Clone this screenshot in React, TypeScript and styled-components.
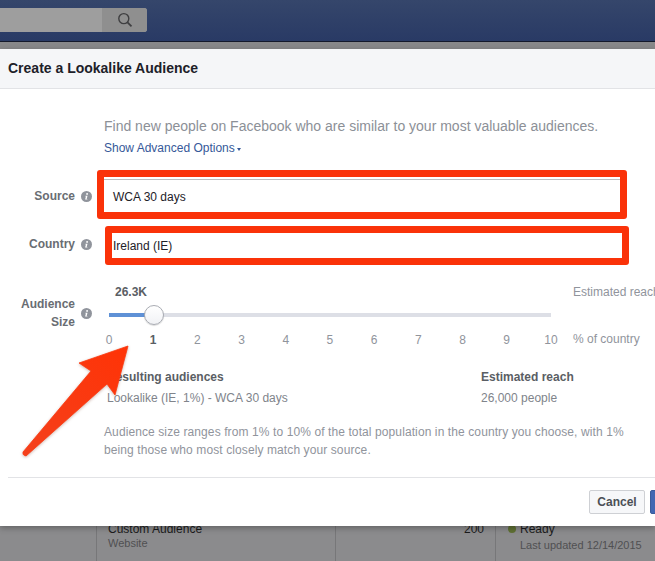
import React from "react";
import styled, { createGlobalStyle } from "styled-components";

const GlobalStyle = createGlobalStyle`
  html, body {
    margin: 0;
    padding: 0;
    background: #8b8b8d;
  }
  body {
    font-family: "Liberation Sans", Arial, sans-serif;
    font-size: 12px;
    overflow: hidden;
  }
`;

const Page = styled.div`
  position: relative;
  width: 655px;
  height: 561px;
  overflow: hidden;
`;

const TopBar = styled.div`
  height: 33px;
  display: flex;
  align-items: flex-start;
  padding-top: 8px;
  background: linear-gradient(#35466b, #293a65);
  border-bottom: 1px solid #14192b;
`;

const SearchBox = styled.div`
  width: 147px;
  height: 24px;
  display: flex;
  justify-content: flex-end;
  background: #9e9e9e;
  border-radius: 0 3px 3px 0;
`;

const SearchButton = styled.div`
  width: 45px;
  display: flex;
  align-items: center;
  justify-content: center;
  background: #8f8f8f;
  border-radius: 0 3px 3px 0;
`;

const DimStrip = styled.div`
  height: 7px;
  background: #88888a;
`;

const Modal = styled.div`
  position: relative;
  z-index: 1;
  height: 477px;
  background: #fff;
  box-shadow: 0 2px 6px rgba(0, 0, 0, 0.3);
  display: flex;
  flex-direction: column;
`;

const ModalHeader = styled.div`
  height: 39px;
  line-height: 38px;
  padding-left: 8px;
  background: #f5f6f8;
  border-bottom: 1px solid #e2e3e6;
  font-size: 14px;
  font-weight: 700;
  color: #1d2129;
`;

const ModalBody = styled.div`
  flex: 1;
  padding-top: 29px;
`;

const Intro = styled.div`
  padding-left: 104px;
  font-size: 14px;
  line-height: 17px;
  color: #8c9097;
  white-space: nowrap;
`;

const AdvancedLink = styled.div`
  padding-left: 104px;
  margin-top: 5px;
  line-height: 16px;
  color: #365899;
  display: flex;
  align-items: center;
  gap: 2px;
`;

const Caret = styled.span`
  width: 0;
  height: 0;
  margin-top: 2px;
  border-left: 2.5px solid transparent;
  border-right: 2.5px solid transparent;
  border-top: 3px solid #365899;
`;

const FormRow = styled.div<{ $top: number }>`
  display: flex;
  align-items: flex-start;
  margin-top: ${(p) => p.$top}px;
`;

const LabelCell = styled.div<{ $top?: number }>`
  flex: none;
  width: 92px;
  margin-top: ${(p) => p.$top ?? 0}px;
  display: flex;
  align-items: center;
  justify-content: flex-end;
  gap: 6px;
`;

const Label = styled.div`
  width: 75px;
  flex: none;
  text-align: right;
  font-weight: 700;
  line-height: 18px;
  color: #696d73;
`;

const InfoIcon = () => (
  <svg width="11" height="11" viewBox="0 0 11 11" style={{ flex: "none" }}>
    <circle cx="5.5" cy="5.5" r="5.5" fill="#90949c" />
    <circle cx="6.1" cy="2.9" r="0.95" fill="#fff" />
    <path d="M4.5 4.7h2l-.8 3.2h.8l-.2.7H4.1l.8-3.2h-.6z" fill="#fff" />
  </svg>
);

const RedBox = styled.div<{ $indent: number; $width: number; $height: number }>`
  flex: none;
  box-sizing: border-box;
  margin-left: ${(p) => p.$indent}px;
  width: ${(p) => p.$width}px;
  height: ${(p) => p.$height}px;
  border: 7px solid #fa3209;
  border-radius: 3px;
  background: #fff;
  display: flex;
  align-items: center;
  color: #1d2129;
`;

const SourceField = styled.div`
  flex: 1;
  height: 100%;
  box-sizing: border-box;
  margin-top: 3px;
  border-top: 1px solid #bdbdbd;
  padding-left: 9px;
  display: flex;
  align-items: center;
`;

const CountryField = styled.div`
  padding-left: 1px;
`;

const SliderRow = styled.div`
  display: flex;
  margin-top: 19px;
`;

const SliderLabel = styled(LabelCell)`
  height: 36px;
  margin-top: 11px;
`;

const SliderColumn = styled.div`
  flex: none;
  width: 442px;
  margin-left: 17px;
`;

const SliderValue = styled.div`
  padding-left: 6px;
  line-height: 16px;
  font-weight: 700;
  color: #5a5e64;
`;

const Track = styled.div`
  position: relative;
  height: 4px;
  margin-top: 13px;
  background: #dddfe6;
`;

const TrackFill = styled.div`
  height: 100%;
  background: #5f91d6;
`;

const Thumb = styled.div`
  position: absolute;
  top: -8px;
  width: 20px;
  height: 20px;
  box-sizing: border-box;
  border: 1px solid #a9acb3;
  border-radius: 50%;
  background: linear-gradient(#fff, #f1f2f5);
  box-shadow: 0 1px 1px rgba(0, 0, 0, 0.15);
`;

const Ticks = styled.div`
  display: flex;
  justify-content: space-between;
  margin-top: 15px;
`;

const Tick = styled.div<{ $active?: boolean }>`
  width: 0;
  display: flex;
  justify-content: center;
  line-height: 16px;
  font-weight: ${(p) => (p.$active ? 700 : 400)};
  color: ${(p) => (p.$active ? "#5a5e64" : "#90949c")};
`;

const SideColumn = styled.div`
  margin-left: 22px;
  white-space: nowrap;
  color: #90949c;
  line-height: 16px;
  display: flex;
  flex-direction: column;
  gap: 31px;
`;

const Results = styled.div`
  display: flex;
  margin-top: 21px;
  padding-left: 107px;
`;

const ResultColumn = styled.div<{ $width?: number }>`
  width: ${(p) => (p.$width ? `${p.$width}px` : "auto")};
  white-space: nowrap;
`;

const ResultTitle = styled.div`
  font-weight: 700;
  line-height: 16px;
  color: #5a5e64;
`;

const ResultValue = styled.div`
  margin-top: 5px;
  line-height: 16px;
  color: #80848b;
`;

const Note = styled.div`
  margin-top: 17px;
  padding-left: 104px;
  line-height: 18px;
  letter-spacing: 0.1px;
  color: #90949c;
  white-space: nowrap;
`;

const ModalFooter = styled.div`
  height: 49px;
  box-sizing: border-box;
  margin-left: 8px;
  margin-right: -60px;
  border-top: 1px solid #e2e3e6;
  display: flex;
  justify-content: flex-end;
  gap: 5px;
  padding-top: 12px;
`;

const CancelButton = styled.button`
  width: 56px;
  height: 24px;
  padding: 0;
  box-sizing: border-box;
  border: 1px solid #ced0d4;
  border-radius: 2px;
  background: #f6f7f9;
  font: 700 12px "Liberation Sans", Arial, sans-serif;
  color: #4b4f56;
`;

const PrimaryButton = styled.button`
  width: 65px;
  height: 24px;
  padding: 0;
  border: 1px solid #3b5b9a;
  border-radius: 2px;
  background: #4267b2;
  font: 700 12px "Liberation Sans", Arial, sans-serif;
  color: #fff;
`;

const Backdrop = styled.div`
  display: flex;
  margin-top: -4px;
  height: 45px;
  background: #8b8b8d;
`;

const Cell = styled.div<{ $width: number; $line?: boolean; $right?: boolean }>`
  flex: none;
  width: ${(p) => p.$width}px;
  box-sizing: border-box;
  padding: 0 11px;
  border-right: ${(p) => (p.$line ? "1px solid #777779" : "0")};
  text-align: ${(p) => (p.$right ? "right" : "left")};
`;

const CellMain = styled.div`
  line-height: 14px;
  color: #1b1b1c;
`;

const CellSub = styled.div`
  font-size: 11px;
  line-height: 14px;
  color: #505052;
`;

const StatusRow = styled.div`
  display: flex;
  align-items: center;
  gap: 4px;
  margin-left: 1px;
`;

const StatusDot = styled.span`
  width: 8px;
  height: 8px;
  border-radius: 50%;
  background: #5f7034;
`;

const StatusSub = styled(CellSub)`
  margin-top: 2px;
  padding-left: 13px;
  white-space: nowrap;
`;

const Arrow = styled.svg`
  position: absolute;
  z-index: 2;
  left: 15px;
  top: 340px;
`;

const ticks = ["0", "1", "2", "3", "4", "5", "6", "7", "8", "9", "10"];

export default function App() {
  return (
    <Page>
      <GlobalStyle />
      <TopBar>
        <SearchBox>
          <SearchButton>
            <svg width="16" height="16" viewBox="0 0 16 16" fill="none" stroke="#3f3f41" strokeWidth="1.4">
              <circle cx="6.8" cy="6.6" r="5" />
              <path d="M10.5 10.3l4 4" strokeWidth="1.8" />
            </svg>
          </SearchButton>
        </SearchBox>
      </TopBar>
      <DimStrip />
      <Modal>
        <ModalHeader>Create a Lookalike Audience</ModalHeader>
        <ModalBody>
          <Intro>Find new people on Facebook who are similar to your most valuable audiences.</Intro>
          <AdvancedLink>
            Show Advanced Options
            <Caret />
          </AdvancedLink>
          <FormRow $top={14}>
            <LabelCell $top={17}>
              <Label>Source</Label>
              <InfoIcon />
            </LabelCell>
            <RedBox $indent={5} $width={530} $height={49}>
              <SourceField>WCA 30 days</SourceField>
            </RedBox>
          </FormRow>
          <FormRow $top={7}>
            <LabelCell $top={9}>
              <Label>Country</Label>
              <InfoIcon />
            </LabelCell>
            <RedBox $indent={13} $width={524} $height={39}>
              <CountryField>Ireland (IE)</CountryField>
            </RedBox>
          </FormRow>
          <SliderRow>
            <SliderLabel>
              <Label>
                Audience
                <br />
                Size
              </Label>
              <InfoIcon />
            </SliderLabel>
            <SliderColumn>
              <SliderValue>26.3K</SliderValue>
              <Track>
                <TrackFill style={{ width: 45 }} />
                <Thumb style={{ left: 35 }} />
              </Track>
              <Ticks>
                {ticks.map((t) => (
                  <Tick key={t} $active={t === "1"}>
                    {t}
                  </Tick>
                ))}
              </Ticks>
            </SliderColumn>
            <SideColumn>
              <div>Estimated reach</div>
              <div>% of country</div>
            </SideColumn>
          </SliderRow>
          <Results>
            <ResultColumn $width={374}>
              <ResultTitle>Resulting audiences</ResultTitle>
              <ResultValue>Lookalike (IE, 1%) - WCA 30 days</ResultValue>
            </ResultColumn>
            <ResultColumn>
              <ResultTitle>Estimated reach</ResultTitle>
              <ResultValue>26,000 people</ResultValue>
            </ResultColumn>
          </Results>
          <Note>
            Audience size ranges from 1% to 10% of the total population in the country you choose, with 1%
            <br />
            being those who most closely match your source.
          </Note>
        </ModalBody>
        <ModalFooter>
          <CancelButton>Cancel</CancelButton>
          <PrimaryButton>Create</PrimaryButton>
        </ModalFooter>
      </Modal>
      <Backdrop>
        <Cell $width={97} $line />
        <Cell $width={239} $line>
          <CellMain>Custom Audience</CellMain>
          <CellSub>Website</CellSub>
        </Cell>
        <Cell $width={160} $line $right>
          <CellMain>200</CellMain>
        </Cell>
        <Cell $width={159}>
          <StatusRow>
            <StatusDot />
            <CellMain>Ready</CellMain>
          </StatusRow>
          <StatusSub>Last updated 12/14/2015</StatusSub>
        </Cell>
      </Backdrop>
      <Arrow width="120" height="125" viewBox="0 0 120 125">
        <defs>
          <linearGradient id="arrowFill" x1="0" y1="1" x2="1" y2="0">
            <stop offset="0" stopColor="#f4401c" />
            <stop offset="1" stopColor="#ff3306" />
          </linearGradient>
        </defs>
        <path
          d="M113 6 L64 23 L76 31 L8 112 Q7 115 11 116 L92 44 L100 55 Z"
          fill="url(#arrowFill)"
          stroke="#fb3a10"
          strokeWidth="0.8"
          strokeLinejoin="round"
          style={{ filter: "drop-shadow(0 1px 1.5px rgba(120,50,30,0.35))" }}
        />
      </Arrow>
    </Page>
  );
}
